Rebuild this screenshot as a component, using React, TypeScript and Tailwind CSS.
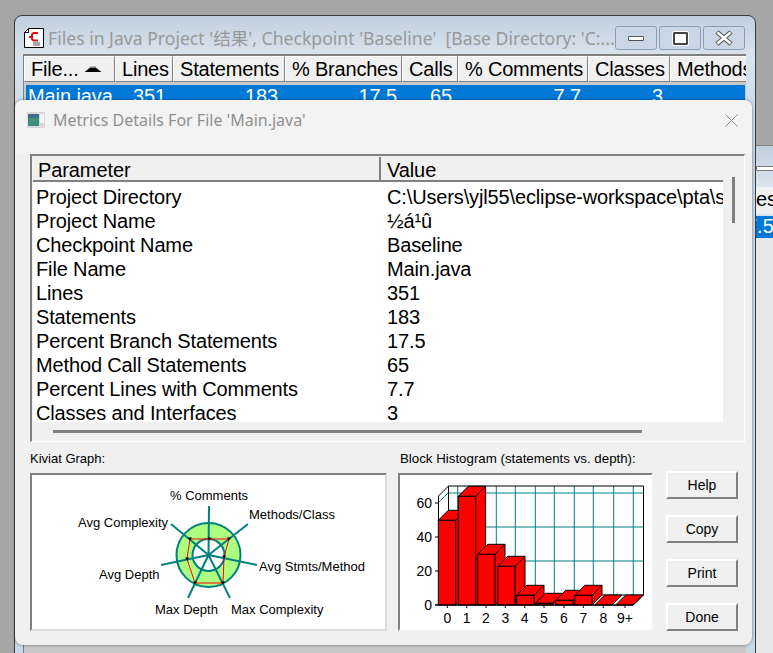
import React from "react";

const rows = [
  ["Project Directory", "C:\\Users\\yjl55\\eclipse-workspace\\pta\\src"],
  ["Project Name", "½á¹û"],
  ["Checkpoint Name", "Baseline"],
  ["File Name", "Main.java"],
  ["Lines", "351"],
  ["Statements", "183"],
  ["Percent Branch Statements", "17.5"],
  ["Method Call Statements", "65"],
  ["Percent Lines with Comments", "7.7"],
  ["Classes and Interfaces", "3"],
];

const columns = [
  { label: "File...", width: "w-[91px]", sort: true },
  { label: "Lines", width: "w-[58px]" },
  { label: "Statements", width: "w-[112px]" },
  { label: "% Branches", width: "w-[117px]" },
  { label: "Calls", width: "w-[56px]" },
  { label: "% Comments", width: "w-[130px]" },
  { label: "Classes", width: "w-[82px]" },
  { label: "Methods/Class", width: "w-[130px]" },
];

const bars = [
  { x: 437.3, top: 519.3 },
  { x: 457.3, top: 495.3 },
  { x: 476.7, top: 553.3 },
  { x: 496.7, top: 565.3 },
  { x: 515.7, top: 594.3 },
  { x: 534.3, top: 602.3 },
  { x: 554.7, top: 599.3 },
  { x: 573.7, top: 594.3 },
  { x: 593.7, top: 604 },
  { x: 614.7, top: 604 },
];

const gridX = [456.7, 476, 495.3, 514.3, 534.3, 553.3, 573.3, 592.3, 612.7, 632.3];
const tickLabels = ["0", "1", "2", "3", "4", "5", "6", "7", "8", "9+"];
const tickX = [446.3, 465.7, 485, 504.3, 523.7, 543, 563, 582.3, 602.3, 624];

const spokes = [
  [209, 506],
  [248, 524],
  [257, 565],
  [230, 598],
  [188, 598],
  [161, 565],
  [171, 524],
];

const markers = [
  [190, 539],
  [209.5, 539],
  [229, 539],
  [224, 557],
  [223, 583],
  [195, 583],
  [187, 559],
];

const kiviatLabels: [string, number, number][] = [
  ["% Comments", 170, 500],
  ["Methods/Class", 249, 519],
  ["Avg Complexity", 78, 527],
  ["Avg Stmts/Method", 259, 571],
  ["Avg Depth", 99, 579],
  ["Max Depth", 155, 614],
  ["Max Complexity", 231, 614],
];

function Kiviat() {
  return (
    <svg viewBox="32 475 353 154" className="w-[353px] h-[154px] block" fontFamily="'Liberation Sans', Arial, sans-serif">
      <circle cx="208.5" cy="555" r="24" fill="none" stroke="#adff7f" strokeWidth="16" />
      <circle cx="208.5" cy="555" r="32" fill="none" stroke="#008080" strokeWidth="2" />
      <circle cx="208.5" cy="555" r="16" fill="none" stroke="#008080" strokeWidth="2" />
      {spokes.map(([x, y]) => (
        <line key={`${x}-${y}`} x1="208.5" y1="555" x2={x} y2={y} stroke="#008080" strokeWidth="2" />
      ))}
      <polygon points="190,539 229,539 224,557 223,583 195,583 187,559" fill="none" stroke="#ff0000" strokeWidth="1" />
      {markers.map(([x, y]) => (
        <path key={`${x}-${y}`} d={`M${x - 2} ${y - 1.5}H${x + 2}L${x} ${y + 1.5}Z`} fill="#000" />
      ))}
      {kiviatLabels.map(([text, x, y]) => (
        <text key={text} x={x} y={y} fontSize="13" fill="#000">
          {text}
        </text>
      ))}
    </svg>
  );
}

function Histogram() {
  return (
    <svg viewBox="399 474 253 156" className="w-[253px] h-[156px] block" fontFamily="'Liberation Sans', Arial, sans-serif">
      <rect x="447" y="485" width="195.5" height="109" fill="#fff" />
      {gridX.map((x) => (
        <line key={x} x1={x} y1="485" x2={x} y2="594" stroke="#008080" strokeWidth="1" />
      ))}
      {[492, 526, 560].map((y) => (
        <line key={y} x1="447" y1={y} x2="642" y2={y} stroke="#008080" strokeWidth="1" />
      ))}
      <line x1="437" y1="502" x2="447" y2="492" stroke="#008080" />
      <path d="M437.5 604 V495 L447.5 485 H642.5 V594 L632.5 604 Z M447.5 485 V594 H642.5" fill="none" stroke="#000" />
      {bars.map((b, i) => {
        const r = b.x + 17.3;
        const t = b.top;
        return (
          <g key={i} fill="#ff0000" stroke="#000" strokeWidth="1">
            <path d={`M${b.x} ${t} L${b.x + 10} ${t - 10} H${r + 10} V594 L${r} 604 V${t} Z`} />
            <rect x={b.x} y={t} width="17.3" height={604 - t} />
            <line x1={r} y1={t} x2={r + 10} y2={t - 10} />
          </g>
        );
      })}
      <line x1="434" y1="604" x2="632" y2="604" stroke="#000" />
      {[
        ["60", 502],
        ["40", 536],
        ["20", 570],
        ["0", 604],
      ].map(([t, y]) => (
        <g key={t}>
          <text x="431" y={Number(y) + 5} fontSize="14" textAnchor="end" fill="#000">
            {t}
          </text>
          <line x1="434" y1={y} x2="437" y2={y} stroke="#000" />
        </g>
      ))}
      {tickLabels.map((t, i) => (
        <g key={t}>
          <line x1={tickX[i]} y1="604" x2={tickX[i]} y2="607" stroke="#000" />
          <text x={tickX[i]} y="622" fontSize="14" textAnchor="middle" fill="#000">
            {t}
          </text>
        </g>
      ))}
    </svg>
  );
}

function CtrlButton({ children }: { children: React.ReactNode }) {
  return (
    <div className="w-[42px] h-[24px] rounded-[3px] border border-[#8c9cb0] bg-[#c9d6e5] flex items-center justify-center">
      {children}
    </div>
  );
}

function BackWindow() {
  return (
    <div className="absolute left-[14px] top-[15px] w-[742px] h-[660px] rounded-t-[8px] border border-[#3a3a3a] bg-[linear-gradient(#c0cfdf,#dae4ee_40px,#c9d9e9_100px)] px-[8px] pt-[9px]">
      <div className="flex items-center h-[26px]">
        <svg viewBox="0 0 20 20" className="w-[20px] h-[20px] ml-[1px] shrink-0">
          <path d="M4.5.5H19.5V19.5H.5V4.5Z" fill="#fff" stroke="#000" />
          <path d="M4.5.5V4.5H.5" fill="none" stroke="#000" />
          <path d="M14 5H9.5L8 6.5V11L9.5 12.5H14M5 9H9" fill="none" stroke="#e01010" strokeWidth="2" />
          <path d="M9 15H16M9 17H16" stroke="#555" />
        </svg>
        <div className="ml-[4px] text-[17.6px] text-[#999] whitespace-nowrap w-[567px] overflow-hidden font-['Noto_Sans','Noto_Sans_CJK_SC',sans-serif] leading-[24px]">
          Files in Java Project '结果', Checkpoint 'Baseline'&nbsp;&nbsp;[Base Directory: 'C:...
        </div>
        <div className="flex gap-[2px]">
          <CtrlButton>
            <div className="w-[16px] h-[5px] bg-white border border-[#555] rounded-[1px]" />
          </CtrlButton>
          <CtrlButton>
            <div className="w-[15px] h-[13px] border-[2px] border-[#444] bg-white rounded-[1px] outline outline-white" />
          </CtrlButton>
          <CtrlButton>
            <svg viewBox="0 0 18 16" className="w-[18px] h-[16px]">
              <path d="M2 2L16 14M16 2L2 14" stroke="#555" strokeWidth="4.5" />
              <path d="M2.5 2.5L15.5 13.5M15.5 2.5L2.5 13.5" stroke="#fff" strokeWidth="2.5" />
            </svg>
          </CtrlButton>
        </div>
      </div>
      <div className="mt-[3px] w-[723px] h-[600px] bg-[#c8c8c8] border-t-2 border-l border-[#808080] overflow-hidden font-['Liberation_Sans',Arial,sans-serif]">
        <div className="flex h-[26px]">
          {columns.map((c) => (
            <div
              key={c.label}
              className={`${c.width} shrink-0 flex items-center px-[6px] bg-[#f0f0f0] border border-t-white border-l-white border-r-[#808080] border-b-[#808080] text-[20px] tracking-[-0.2px] text-black whitespace-nowrap`}
            >
              {c.label}
              {c.sort && (
                <svg viewBox="0 0 16 6" className="w-[16px] h-[6px] ml-[6px]">
                  <path d="M0 6L5 2H11L16 6Z M5 1H11" fill="#000" stroke="#000" strokeWidth="0.5" />
                </svg>
              )}
            </div>
          ))}
        </div>
        <div className="mt-[3px] ml-[2px] w-[719px] bg-[#0078d7] h-[30px] flex text-[20px] leading-[23px] tracking-[-0.1px] text-white">
          <span className="w-[89px] pl-[2px]">Main.java</span>
          <span className="w-[51px] text-right">351</span>
          <span className="w-[112px] text-right">183</span>
          <span className="w-[119px] text-right">17.5</span>
          <span className="w-[55px] text-right">65</span>
          <span className="w-[129px] text-right">7.7</span>
          <span className="w-[82px] text-right">3</span>
        </div>
      </div>
    </div>
  );
}

function SideWindow() {
  return (
    <div className="absolute left-[755px] top-[145px] w-[30px] h-[520px] border-t border-[#808080] bg-[linear-gradient(#c0cfdf,#dae4ee_40px)]">
      <div className="mt-[20px] w-[18px] h-[5px] ml-[1px] bg-white border border-[#777] rounded-[1px]" />
      <div className="mt-[16px] h-[27px] bg-[#f0f0f0] text-[20px] leading-[24px] text-black font-['Liberation_Sans',Arial,sans-serif] pl-[1px] overflow-hidden whitespace-nowrap">
        es
      </div>
      <div className="mt-[2px] h-[22px] bg-[#0078d7] text-[20px] leading-[20px] text-white font-['Liberation_Sans',Arial,sans-serif] overflow-hidden whitespace-nowrap">
        <span className="ml-[-9px]">7.5</span>
      </div>
      <div className="h-[430px] bg-[#e8e8e8]" />
    </div>
  );
}

function MetricsDialog() {
  return (
    <div className="absolute left-[15px] top-[100px] w-[737px] h-[545px] rounded-[8px] bg-[#f0f0f0] shadow-[0_0_3px_rgba(0,0,0,0.5)] overflow-hidden font-['Liberation_Sans',Arial,sans-serif]">
      <div className="h-[54px] bg-[#f3f3f3] flex items-start pt-[12px] pl-[12px]">
        <svg viewBox="0 0 18 16" className="w-[18px] h-[16px] shrink-0">
          <rect width="18" height="16" fill="#d8d8d8" />
          <rect x="1" y="2" width="11" height="12" fill="#3f8f7f" />
          <rect x="1" y="2" width="11" height="4" fill="#3f6f8f" />
          <rect x="13" y="2" width="4" height="9" fill="#f4f4f4" />
        </svg>
        <div className="ml-[8px] text-[16px] leading-[17px] text-[#8f8f8f] font-['Noto_Sans',sans-serif]">
          Metrics Details For File 'Main.java'
        </div>
        <svg viewBox="0 0 13 13" className="w-[13px] h-[13px] ml-auto mr-[14px] mt-[2px]">
          <path d="M.5.5L12.5 12.5M12.5.5L.5 12.5" stroke="#8f8f8f" strokeWidth="1" />
        </svg>
      </div>

      <div className="ml-[15px] w-[715px] h-[288px] border-t-2 border-l-2 border-[#808080] border-r border-b border-r-white border-b-white pt-[1px] pl-[1px]">
        <div className="flex">
          <div className="w-[690px]">
            <div className="flex h-[25px] bg-[#f0f0f0] border-b-2 border-[#808080] text-[20px] leading-[26px] tracking-[-0.1px] text-black">
              <div className="w-[348px] pl-[5px] border-r-2 border-[#808080] h-full">Parameter</div>
              <div className="pl-[6px]">Value</div>
            </div>
            <div className="h-[240px] bg-white overflow-hidden pt-[3px] text-[20px] leading-[24px] tracking-[-0.14px] text-black">
              {rows.map(([name, value]) => (
                <div key={name} className="flex h-[24px] whitespace-nowrap">
                  <div className="w-[354px] pl-[3px] shrink-0">{name}</div>
                  <div className="overflow-hidden">{value}</div>
                </div>
              ))}
            </div>
          </div>
          <div className="ml-[9px] mt-[20px] w-[3px] h-[46px] bg-[#808080]" />
        </div>
        <div className="mt-[8px] ml-[20px] w-[589px] h-[3px] bg-[#808080]" />
      </div>

      <div className="flex ml-[15px] mt-[8px]">
        <div className="w-[357px]">
          <div className="text-[13px] leading-[17px] text-black">Kiviat Graph:</div>
          <div className="mt-[6px] h-[158px] bg-white border-2 border-t-[#808080] border-l-[#808080] border-r-[#dcdcdc] border-b-[#dcdcdc]">
            <Kiviat />
          </div>
        </div>
        <div className="ml-[11px] w-[255px]">
          <div className="text-[13.3px] leading-[17px] text-black ml-[2px] whitespace-nowrap">Block Histogram (statements vs. depth):</div>
          <div className="mt-[6px] h-[158px] bg-white border-2 border-t-[#808080] border-l-[#808080] border-r-[#f8f8f8] border-b-[#f8f8f8] overflow-hidden">
            <Histogram />
          </div>
        </div>
        <div className="ml-[13px] mt-[21px] flex flex-col gap-[16px]">
          {["Help", "Copy", "Print", "Done"].map((b) => (
            <div
              key={b}
              className="w-[72px] h-[28px] flex items-center justify-center bg-[#f0f0f0] border-2 border-t-white border-l-white border-r-[#808080] border-b-[#808080] text-[14px] text-black"
            >
              {b}
            </div>
          ))}
        </div>
      </div>
    </div>
  );
}

export default function App() {
  return (
    <div className="relative w-[773px] h-[653px] overflow-hidden bg-[#a6a6a6]">
      <SideWindow />
      <BackWindow />
      <MetricsDialog />
    </div>
  );
}
